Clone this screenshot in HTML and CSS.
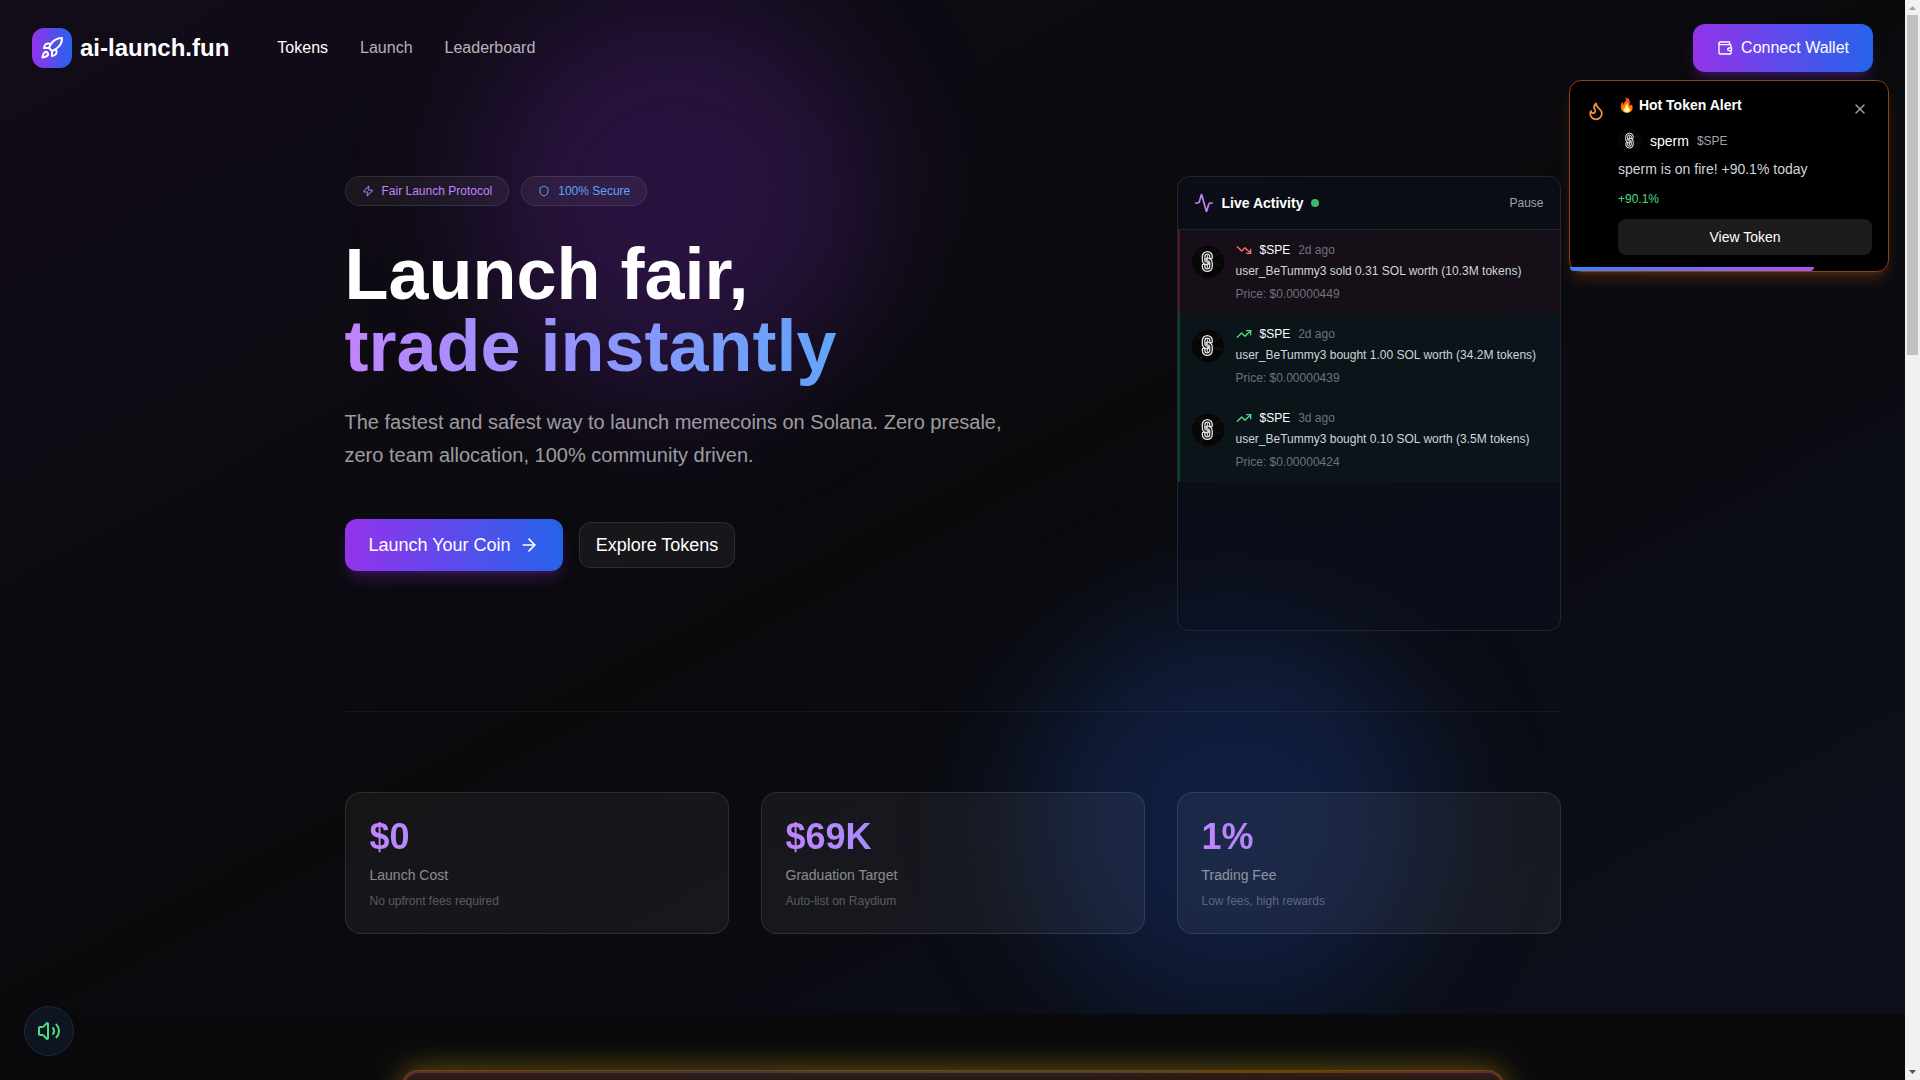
FILE: index.html
```html
<!DOCTYPE html>
<html lang="en">
<head>
<meta charset="utf-8">
<meta name="viewport" content="width=device-width, initial-scale=1">
<title>ai-launch.fun</title>
<link rel="stylesheet" href="styles.css">
</head>
<body>
<svg class="sprite" aria-hidden="true">
  <symbol id="up" viewBox="0 0 24 24"><path d="M16 7h6v6"/><path d="m22 7-8.500 8.500-5-5L2 17"/></symbol>
  <symbol id="down" viewBox="0 0 24 24"><path d="M16 17h6v-6"/><path d="m22 17-8.500-8.500-5 5L2 7"/></symbol>
  <symbol id="coin" viewBox="0 0 32 32">
    <circle cx="16" cy="16" r="16" fill="#060606" stroke="none"/>
    <path d="M4 5 16 16 28 6M16 16 30 20M16 16 8 30" stroke="#101010" stroke-width="2" fill="none"/>
    <g fill="none" stroke-linecap="round">
      <path d="M19 11.500V10.500a3.700 3.700 0 0 0-7.400 0V14a3.500 3.500 0 0 0 3.700 3.500" stroke="#e8e8e8" stroke-width="3.800"/>
      <path d="M11.600 19.500v1a3.700 3.700 0 0 0 7.400 0V17a3.500 3.500 0 0 0-3.700-3.500" stroke="#e8e8e8" stroke-width="3.800"/>
      <path d="M19 11.500V10.500a3.700 3.700 0 0 0-7.400 0V14a3.500 3.500 0 0 0 3.700 3.500M11.600 19.500v1a3.700 3.700 0 0 0 7.400 0V17a3.500 3.500 0 0 0-3.700-3.500" stroke="#101010" stroke-width="1.300"/>
      <path d="M15.300 9.500v4M15.300 17.500v4" stroke="#e8e8e8" stroke-width="1"/>
    </g>
  </symbol>
</svg>
<div class="window">
  <div class="page">
    <section class="hero">
      <div class="glow glow-purple"></div>
      <div class="glow glow-blue"></div>
      <header class="topbar">
        <a class="brand" href="#">
          <span class="brand-mark"><svg class="icon icon-24" viewBox="0 0 24 24"><path d="M4.500 16.500c-1.500 1.260-2 5-2 5s3.740-.5 5-2c.71-.84.7-2.130-.09-2.910a2.180 2.180 0 0 0-2.910-.09z"/><path d="m12 15-3-3a22 22 0 0 1 2-3.950A12.880 12.880 0 0 1 22 2c0 2.720-.78 7.500-6 11a22.350 22.350 0 0 1-4 2z"/><path d="M9 12H4s.55-3.030 2-4c1.620-1.080 5 0 5 0"/><path d="M12 15v5s3.030-.55 4-2c1.080-1.620 0-5 0-5"/></svg></span>
          <span>ai-launch.fun</span>
        </a>
        <nav class="links">
          <a class="active" href="#">Tokens</a>
          <a href="#">Launch</a>
          <a href="#">Leaderboard</a>
        </nav>
        <button class="btn-primary btn-wallet" type="button">
          <svg class="icon icon-16" viewBox="0 0 24 24"><path d="M19 7V4a1 1 0 0 0-1-1H5a2 2 0 0 0 0 4h15a1 1 0 0 1 1 1v4h-3a2 2 0 0 0 0 4h3a1 1 0 0 0 1-1v-2a1 1 0 0 0-1-1"/><path d="M3 5v14a2 2 0 0 0 2 2h15a1 1 0 0 0 1-1v-4"/></svg>
          Connect Wallet
        </button>
      </header>
      <main class="container">
        <div class="intro">
          <div class="pitch">
            <div class="pills">
              <span class="pill purple"><svg class="icon icon-12" viewBox="0 0 24 24"><path d="M4 14a1 1 0 0 1-.78-1.630l9.900-10.200a.5.5 0 0 1 .86.46l-1.920 6.020A1 1 0 0 0 13 10h7a1 1 0 0 1 .78 1.630l-9.900 10.200a.5.5 0 0 1-.86-.46l1.920-6.020A1 1 0 0 0 11 14z"/></svg>Fair Launch Protocol</span>
              <span class="pill blue"><svg class="icon icon-12" viewBox="0 0 24 24"><path d="M20 13c0 5-3.500 7.500-7.660 8.950a1 1 0 0 1-.67-.01C7.500 20.500 4 18 4 13V6a1 1 0 0 1 1-1c2 0 4.500-1.200 6.240-2.720a1.170 1.170 0 0 1 1.520 0C14.510 3.810 17 5 19 5a1 1 0 0 1 1 1z"/></svg>100% Secure</span>
            </div>
            <h1>Launch fair,<br><span class="gradient-text">trade instantly</span></h1>
            <p class="lead">The fastest and safest way to launch memecoins on Solana. Zero presale, zero team allocation, 100% community driven.</p>
            <div class="actions">
              <button class="btn-primary btn-launch" type="button">Launch Your Coin <svg class="icon icon-20" viewBox="0 0 24 24"><path d="M5 12h14"/><path d="m12 5 7 7-7 7"/></svg></button>
              <button class="btn-outline" type="button">Explore Tokens</button>
            </div>
          </div>
          <aside class="activity">
            <div class="activity-head">
              <svg class="icon icon-20 purple" viewBox="0 0 24 24"><path d="M22 12h-2.480a2 2 0 0 0-1.930 1.460l-2.350 8.360a.25.25 0 0 1-.48 0L9.240 2.180a.25.25 0 0 0-.48 0l-2.350 8.360A2 2 0 0 1 4.490 12H2"/></svg>
              <h2>Live Activity</h2>
              <span class="live-dot"></span>
              <button class="pause" type="button">Pause</button>
            </div>
            <ul class="trades">
              <li class="trade sell">
                <svg class="coin"><use href="#coin"/></svg>
                <div class="trade-body">
                  <div class="trade-meta"><svg class="icon icon-16"><use href="#down"/></svg><b>$SPE</b><time>2d ago</time></div>
                  <p>user_BeTummy3 sold 0.31 SOL worth (10.3M tokens)</p>
                  <small>Price: $0.00000449</small>
                </div>
              </li>
              <li class="trade buy">
                <svg class="coin"><use href="#coin"/></svg>
                <div class="trade-body">
                  <div class="trade-meta"><svg class="icon icon-16"><use href="#up"/></svg><b>$SPE</b><time>2d ago</time></div>
                  <p>user_BeTummy3 bought 1.00 SOL worth (34.2M tokens)</p>
                  <small>Price: $0.00000439</small>
                </div>
              </li>
              <li class="trade buy">
                <svg class="coin"><use href="#coin"/></svg>
                <div class="trade-body">
                  <div class="trade-meta"><svg class="icon icon-16"><use href="#up"/></svg><b>$SPE</b><time>3d ago</time></div>
                  <p>user_BeTummy3 bought 0.10 SOL worth (3.5M tokens)</p>
                  <small>Price: $0.00000424</small>
                </div>
              </li>
            </ul>
          </aside>
        </div>
        <div class="stats">
          <div class="stat"><strong class="gradient-text">$0</strong><span>Launch Cost</span><small>No upfront fees required</small></div>
          <div class="stat"><strong class="gradient-text">$69K</strong><span>Graduation Target</span><small>Auto-list on Raydium</small></div>
          <div class="stat"><strong class="gradient-text">1%</strong><span>Trading Fee</span><small>Low fees, high rewards</small></div>
        </div>
      </main>
    </section>
    <section class="featured">
      <div class="featured-card"><div class="featured-frame"><div class="featured-body"></div></div></div>
    </section>

    <div class="toast" role="alert">
      <svg class="icon icon-20 toast-icon" viewBox="0 0 24 24"><path d="M8.500 14.500A2.500 2.500 0 0 0 11 12c0-1.380-.5-2-1-3-1.072-2.143-.224-4.054 2-6 .5 2.500 2 4.900 4 6.500 2 1.600 3 3.500 3 5.500a7 7 0 1 1-14 0c0-1.153.433-2.294 1-3a2.500 2.500 0 0 0 2.500 2.500z"/></svg>
      <div class="toast-body">
        <div class="toast-head">
          <h3>🔥 Hot Token Alert</h3>
          <button class="close" type="button" aria-label="Close"><svg class="icon icon-16" viewBox="0 0 24 24"><path d="M18 6 6 18"/><path d="m6 6 12 12"/></svg></button>
        </div>
        <div class="toast-token"><svg class="coin"><use href="#coin"/></svg><b>sperm</b><span>$SPE</span></div>
        <p>sperm is on fire! +90.1% today</p>
        <span class="gain">+90.1%</span>
        <button class="view" type="button">View Token</button>
      </div>
      <div class="toast-progress" style="width:76.7%"></div>
    </div>
    <button class="sound" type="button" aria-label="Sound"><svg class="icon icon-24" viewBox="0 0 24 24"><path d="M11 4.702a.705.705 0 0 0-1.203-.498L6.413 7.587A1.400 1.400 0 0 1 5.416 8H3a1 1 0 0 0-1 1v6a1 1 0 0 0 1 1h2.416a1.400 1.400 0 0 1 .997.413l3.383 3.384A.705.705 0 0 0 11 19.298z"/><path d="M16 9a5 5 0 0 1 0 6"/><path d="M19.364 18.364a9 9 0 0 0 0-12.728"/></svg></button>
  </div>
  <div class="scrollbar" aria-hidden="true">
    <svg viewBox="0 0 15 15"><path d="M4 10h7L7.500 6z" fill="#a3a3a3"/></svg>
    <div class="track"><div class="thumb"></div></div>
    <svg viewBox="0 0 15 15"><path d="M4 5h7L7.500 9z" fill="#505050"/></svg>
  </div>
</div>
</body>
</html>
```
FILE: styles.css
```css
* { box-sizing: border-box; margin: 0; padding: 0; }

body {
  background: #0a0a0d;
  color: #fff;
  font-family: "Liberation Sans", Arial, sans-serif;
  font-size: 16px;
  line-height: 24px;
}

a { color: inherit; text-decoration: none; }
button { font: inherit; color: inherit; border: 0; background: none; cursor: pointer; }
ul { list-style: none; }
b { font-weight: 400; }

.sprite { position: absolute; width: 0; height: 0; }

.icon {
  fill: none;
  stroke: currentColor;
  stroke-width: 2;
  stroke-linecap: round;
  stroke-linejoin: round;
  flex: none;
}
.icon-12 { width: 12px; height: 12px; }
.icon-16 { width: 16px; height: 16px; }
.icon-20 { width: 20px; height: 20px; }
.icon-24 { width: 24px; height: 24px; }
.purple { color: #c084fc; }
.blue { color: #60a5fa; }

.gradient-text {
  background: linear-gradient(to right, #c084fc, #60a5fa);
  -webkit-background-clip: text;
  background-clip: text;
  color: transparent;
}

/* Window: page column plus scrollbar gutter */
.window {
  display: grid;
  grid-template-columns: 1fr 15px;
  height: 100vh;
  overflow: hidden;
}
.page { position: relative; overflow: hidden; }

.scrollbar { display: flex; flex-direction: column; background: #f1f1f1; }
.scrollbar svg { width: 15px; height: 15px; flex: none; }
.track { flex: 1; padding: 0 2px; }
.thumb { height: 32.4%; background: #c1c1c1; }

/* Hero */
.hero {
  position: relative;
  overflow: hidden;
  padding-bottom: 80px;
  background: linear-gradient(to bottom right, rgba(88, 28, 135, 0.1), rgba(10, 10, 13, 0) 50%, rgba(30, 58, 138, 0.12)), #0a0a0d;
}
.glow {
  position: absolute;
  width: 400px;
  height: 400px;
  border-radius: 50%;
  filter: blur(64px);
}
.glow-purple { top: 0; left: 25%; background: rgba(147, 51, 234, 0.2); }
.glow-blue { bottom: 0; right: 25%; background: rgba(37, 99, 235, 0.2); }

.topbar {
  position: relative;
  display: flex;
  align-items: center;
  height: 96px;
  padding: 0 32px;
}
.brand { display: flex; align-items: center; gap: 8px; font-size: 24px; font-weight: 700; }
.brand-mark {
  display: grid;
  place-items: center;
  width: 40px;
  height: 40px;
  border-radius: 12px;
  background: linear-gradient(to right, #9333ea, #2563eb);
}
.links { display: flex; gap: 32px; margin-left: 48px; color: rgba(255, 255, 255, 0.7); }
.links .active { color: #fff; }

.btn-primary {
  display: flex;
  align-items: center;
  gap: 8px;
  padding: 12px 24px;
  border-radius: 12px;
  background: linear-gradient(to right, #9333ea, #2563eb);
  box-shadow: 0 10px 15px -3px rgba(147, 51, 234, 0.25), 0 4px 6px -4px rgba(147, 51, 234, 0.25);
}
.btn-wallet { margin-left: auto; }

.container { position: relative; max-width: 1280px; margin: 0 auto; padding: 80px 32px 0; }

.intro {
  display: grid;
  grid-template-columns: repeat(3, 1fr);
  gap: 32px;
  align-items: start;
  padding-bottom: 80px;
  border-bottom: 1px solid rgba(255, 255, 255, 0.05);
}
.pitch { grid-column: span 2; }

.pills { display: flex; gap: 12px; margin-bottom: 32px; }
.pill {
  display: flex;
  align-items: center;
  gap: 8px;
  padding: 6px 16px;
  border: 1px solid rgba(255, 255, 255, 0.1);
  border-radius: 15px;
  background: rgba(255, 255, 255, 0.05);
  font-size: 12px;
  line-height: 16px;
}

h1 { font-size: 72px; line-height: 72px; margin-bottom: 24px; }
.lead {
  max-width: 672px;
  font-size: 20px;
  line-height: 33px;
  color: rgba(255, 255, 255, 0.6);
  margin-bottom: 47px;
}
.actions { display: flex; align-items: center; gap: 16px; font-size: 18px; line-height: 28px; }
.btn-outline {
  padding: 8px 16px;
  border: 1px solid rgba(255, 255, 255, 0.1);
  border-radius: 12px;
  background: rgba(255, 255, 255, 0.05);
}

/* Live activity */
.activity {
  border: 1px solid #1f2633;
  border-radius: 12px;
  background: rgba(13, 18, 34, 0.4);
  overflow: hidden;
}
.activity-head {
  display: flex;
  align-items: center;
  gap: 8px;
  padding: 16px;
  border-bottom: 1px solid #1f2633;
  line-height: 20px;
}
.activity-head h2 { font-size: 14px; }
.live-dot { width: 8px; height: 8px; border-radius: 50%; background: #40b868; }
.pause { margin-left: auto; font-size: 12px; line-height: 16px; color: #9ca3af; }

.trades { height: 400px; }
.trade { display: flex; gap: 12px; padding: 12px; border-left: 2px solid; }
.sell { border-color: #4f1a20; background: rgba(239, 68, 68, 0.05); }
.buy { border-color: #10402a; background: rgba(34, 197, 94, 0.04); }
.sell .icon { color: #f87171; }
.buy .icon { color: #4ade80; }
.coin { width: 32px; height: 32px; flex: none; }
.trade .coin { margin-top: 4px; }
.trade-body { font-size: 12px; line-height: 16px; }
.trade-meta { display: flex; align-items: center; gap: 8px; margin-bottom: 4px; }
.trade time, .trade small { color: #6b7280; }
.trade small { display: block; font-size: 12px; }
.trade p { line-height: 18px; margin-bottom: 6px; color: #d1d5db; }

/* Stats */
.stats { display: grid; grid-template-columns: repeat(3, 1fr); gap: 32px; padding-top: 80px; }
.stat {
  display: flex;
  flex-direction: column;
  gap: 8px;
  padding: 24px;
  border: 1px solid rgba(255, 255, 255, 0.1);
  border-radius: 16px;
  background: rgba(255, 255, 255, 0.05);
}
.stat strong { font-size: 36px; line-height: 40px; }
.stat span { font-size: 14px; line-height: 20px; color: rgba(255, 255, 255, 0.5); }
.stat small { font-size: 12px; line-height: 16px; color: rgba(255, 255, 255, 0.3); }

/* Featured banner */
.featured { padding: 56px 32px; }
.featured-card {
  max-width: 1102px;
  margin: 0 auto;
  padding: 1px;
  border-radius: 16px;
  background: #6b4a0a;
  box-shadow: 0 0 30px rgba(234, 179, 8, 0.45);
}
.featured-frame {
  padding: 2px;
  border-radius: 15px;
  background: linear-gradient(to right, #642a38, #3c3454 30%, #3a4a44 50%, #6b3e10 80%, #642a30);
}
.featured-body {
  min-height: 320px;
  border-radius: 13px;
  background: linear-gradient(to bottom, #34201a, #140c0c 16px);
}

/* Toast */
.toast {
  position: absolute;
  top: 80px;
  right: 16px;
  display: flex;
  gap: 12px;
  width: 320px;
  padding: 16px;
  border: 1px solid #8a420f;
  border-radius: 12px;
  background: #000;
  box-shadow: 0 10px 15px -3px rgba(249, 115, 22, 0.2), 0 4px 6px -4px rgba(249, 115, 22, 0.2);
}
.toast-icon { color: #fb923c; margin-top: 4px; }
.toast-body { flex: 1; display: flex; flex-direction: column; }
.toast-head { display: flex; justify-content: space-between; align-items: flex-start; margin-bottom: 8px; }
.toast h3 { font-size: 14px; line-height: 17px; }
.close { display: grid; place-items: center; width: 24px; height: 24px; color: #9ca3af; }
.toast-token { display: flex; align-items: center; gap: 8px; margin-bottom: 6px; font-size: 14px; }
.toast-token .coin { width: 24px; height: 24px; }
.toast-token span { font-size: 12px; color: #9ca3af; }
.toast p { font-size: 14px; line-height: 20px; color: #d1d5db; margin-bottom: 12px; }
.gain { font-size: 12px; line-height: 16px; color: #4ade80; margin-bottom: 12px; }
.view { height: 36px; border-radius: 8px; background: #1c1c1d; font-size: 14px; }
.toast-progress {
  position: absolute;
  left: 0;
  bottom: 0;
  height: 4px;
  border-radius: 0 0 4px 4px;
  background: linear-gradient(to right, #3b82f6, #a855f7);
}

.sound {
  position: absolute;
  left: 24px;
  bottom: 24px;
  display: grid;
  place-items: center;
  width: 50px;
  height: 50px;
  border: 1px solid #1e293b;
  border-radius: 50%;
  background: #0e1521;
  color: #4ade80;
  box-shadow: 0 10px 15px -3px rgba(0, 0, 0, 0.2);
}
```
